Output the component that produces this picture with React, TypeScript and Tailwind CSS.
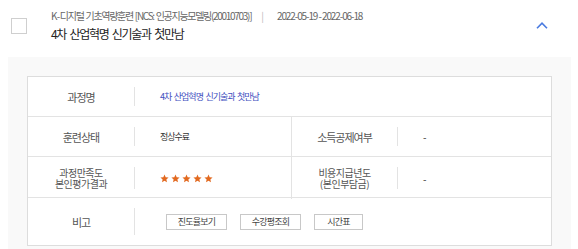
import React from "react";

const Star = () => (
  <svg width="9" height="9" viewBox="0 0 24 24" className="block">
    <path
      d="M12 1.5l3.1 7.1 7.7.7-5.8 5.1 1.7 7.6L12 18l-6.7 4 1.7-7.6L1.2 9.3l7.7-.7z"
      fill="#e2691f"
    />
  </svg>
);

const Label = ({ children, two }: { children: React.ReactNode; two?: boolean }) => (
  <div className="py-[10px] h-full">
    <div
      className={`h-full border-r border-[#e3e3e3] flex items-center justify-center text-center text-[#555] ${
        two
          ? "text-[10px] leading-[11px] tracking-[-0.5px]"
          : "text-[11px] leading-[12px] tracking-[-1px]"
      }`}
    >
      {children}
    </div>
  </div>
);

const Btn = ({ children, w }: { children: React.ReactNode; w: string }) => (
  <div
    className={`${w} h-[16px] border border-[#c8c8c8] bg-white flex items-center justify-center text-[9px] text-[#444] tracking-[-0.8px]`}
  >
    {children}
  </div>
);

export default function App() {
  return (
    <div
      className="w-[578px] bg-white"
      style={{ fontFamily: '"Noto Sans CJK KR", "Noto Sans", sans-serif' }}
    >
      {/* header */}
      <div className="h-[57px] flex items-start">
        <div className="ml-[11px] mt-[18px] w-[16px] h-[16px] border border-[#cfcfcf] bg-white shrink-0" />
        <div className="ml-[24px] mt-[9px] flex-1">
          <div className="flex items-center text-[10px] leading-[14px] text-[#666]">
            <span className="tracking-[-1.3px] [word-spacing:1px]">
              K<span className="tracking-[-0.3px] ml-[0.5px]">-</span>디지털 기초역량훈련 [NCS: 인공지능모델링(20010703)]
            </span>
            <span className="ml-[10px] mr-[13px] text-[#bbb]">|</span>
            <span className="tracking-[-1.1px]">2022-05-19 - 2022-06-18</span>
          </div>
          <div className="mt-[3px] text-[12px] leading-[16px] text-[#222] tracking-[-1.3px] [word-spacing:2px]">
            4차 산업혁명 신기술과 첫만남
          </div>
        </div>
        <div className="mt-[22px] mr-[30px]">
          <svg width="12" height="7" viewBox="0 0 12 7">
            <path d="M1 6.2L6 1.2l5 5" stroke="#4a7be0" strokeWidth="1.6" fill="none" />
          </svg>
        </div>
      </div>

      {/* gray panel */}
      <div className="ml-[8px] mr-[7px] bg-[#f9f9f9] pt-[19px] px-[19px] pb-[19px]">
        <div className="border border-[#dddddd] bg-white">
          {/* row 1 */}
          <div className="grid grid-cols-[107px_1fr] h-[40px] border-b border-[#e3e3e3]">
            <Label>과정명</Label>
            <div className="flex items-center pl-[25px] text-[9px] text-[#3f4fc0] tracking-[-1px] [word-spacing:1.5px]">
              4차 산업혁명 신기술과 첫만남
            </div>
          </div>
          {/* row 2 */}
          <div className="grid grid-cols-[107px_157px_1fr] h-[40px] border-b border-[#e3e3e3]">
            <Label>훈련상태</Label>
            <div className="flex items-center pl-[25px] text-[9px] text-[#333] tracking-[-1px] border-r border-[#e3e3e3]">
              정상수료
            </div>
            <div className="grid grid-cols-[106px_1fr]">
              <Label>소득공제여부</Label>
              <div className="flex items-center pl-[25px] text-[10px] text-[#333]">-</div>
            </div>
          </div>
          {/* row 3 */}
          <div className="grid grid-cols-[107px_157px_1fr] h-[41px] border-b border-[#e3e3e3]">
            <Label two>
              과정만족도
              <br />
              본인평가결과
            </Label>
            <div className="flex items-center pl-[25px] gap-[2px] border-r border-[#e3e3e3]">
              <Star />
              <Star />
              <Star />
              <Star />
              <Star />
            </div>
            <div className="grid grid-cols-[106px_1fr]">
              <Label two>
                비용지급년도
                <br />
                (본인부담금)
              </Label>
              <div className="flex items-center pl-[25px] text-[10px] text-[#333]">-</div>
            </div>
          </div>
          {/* row 4 */}
          <div className="grid grid-cols-[107px_1fr] h-[47px]">
            <Label>비고</Label>
            <div className="flex items-center pl-[31px] gap-[13px]">
              <Btn w="w-[61px]">진도율보기</Btn>
              <Btn w="w-[61px]">수강평조회</Btn>
              <Btn w="w-[49px]">시간표</Btn>
            </div>
          </div>
        </div>
      </div>
    </div>
  );
}
